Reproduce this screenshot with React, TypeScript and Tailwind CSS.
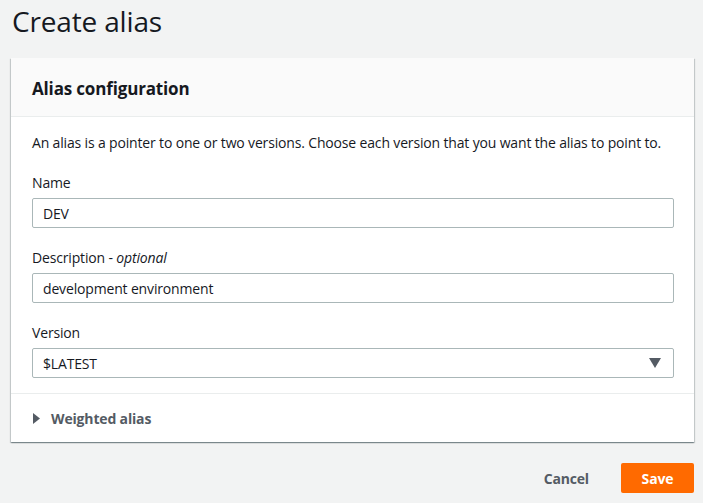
import React from 'react';

const font = { fontFamily: '"Open Sans", "Liberation Sans", sans-serif' };

function Field({ label, optional, children }: { label: string; optional?: boolean; children: React.ReactNode }) {
  return (
    <div className="flex flex-col">
      <label className="text-[14px] leading-[20px] text-[#16191f] mb-[5px]">
        {label}
        {optional && (
          <>
            {' - '}
            <i>optional</i>
          </>
        )}
      </label>
      {children}
    </div>
  );
}

export default function App() {
  return (
    <div className="min-h-[503px] w-full bg-[#f2f3f3] text-[#16191f] tracking-[-0.01em]" style={font}>
      <h1 className="px-[12px] pt-[3px] text-[28px] leading-[36px] font-normal">Create alias</h1>

      <div className="ml-[11px] mr-[9px] mt-[19px] bg-white shadow-[0_1px_1px_0_rgba(0,28,36,0.3),1px_1px_1px_0_rgba(0,28,36,0.15),-1px_1px_1px_0_rgba(0,28,36,0.15)]">
        <div className="h-[59px] bg-[#fafafa] border-b border-[#eaeded] pl-[21px] pr-[20px] pt-[3px] flex items-center">
          <h2 className="text-[17px] font-bold leading-[22px]">Alias configuration</h2>
        </div>

        <div className="pl-[21px] pr-[20px] pt-[16px] pb-[15px] flex flex-col gap-[20px] border-b border-[#eaeded]">
          <p className="text-[14px] leading-[20px]">
            An alias is a pointer to one or two versions. Choose each version that you want the alias to point to.
          </p>
          <Field label="Name">
            <input
              readOnly
              value="DEV"
              className="h-[30px] border border-[#aab7b8] rounded-[2px] px-[10px] text-[14px] text-[#16191f] outline-none"
              style={font}
            />
          </Field>
          <Field label="Description" optional>
            <input
              readOnly
              value="development environment"
              className="h-[30px] border border-[#aab7b8] rounded-[2px] px-[10px] text-[14px] text-[#16191f] outline-none"
              style={font}
            />
          </Field>
          <Field label="Version">
            <div className="h-[30px] border border-[#aab7b8] rounded-[2px] pl-[10px] pr-[12px] flex items-center justify-between text-[14px]">
              <span>$LATEST</span>
              <svg width="12" height="10" viewBox="0 0 12 10">
                <path d="M0 0 L12 0 L6 10 Z" fill="#545b64" />
              </svg>
            </div>
          </Field>
        </div>

        <div className="h-[48px] flex items-center pl-[22px] gap-[11px]">
          <svg width="7" height="11" viewBox="0 0 7 11">
            <path d="M0 0 L7 5.5 L0 11 Z" fill="#545b64" />
          </svg>
          <span className="text-[14px] font-bold text-[#545b64]">Weighted alias</span>
        </div>
      </div>

      <div className="flex justify-end items-center gap-[12px] px-[9px] mt-[21px]">
        <button className="px-[20px] h-[30px] text-[14px] font-bold text-[#545b64]" style={font}>
          Cancel
        </button>
        <button className="w-[73px] h-[30px] bg-[#ff6a00] rounded-[2px] text-[14px] font-bold text-white" style={font}>
          Save
        </button>
      </div>
    </div>
  );
}
